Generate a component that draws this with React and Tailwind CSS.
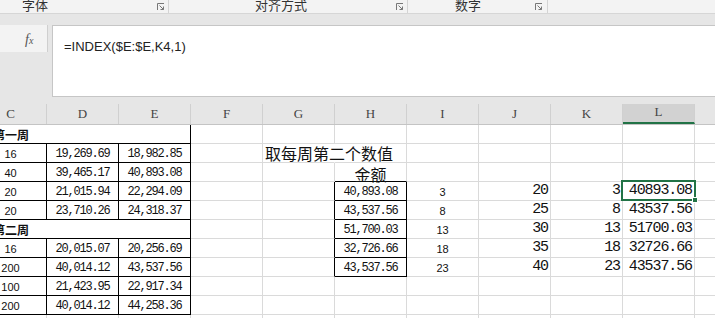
import React from 'react'

const cjk = "font-['Noto_Sans_CJK_SC',sans-serif]"
const mono = "font-['Liberation_Mono',monospace] text-[12px] tracking-[-1.2px]"
const sans = "font-['Liberation_Sans',sans-serif] text-[11px]"
const big = "font-['Liberation_Mono',monospace] text-[15px] tracking-[-1.1px]"

const RB = {
  g: 'border-r border-r-[#dadada]',
  k: 'border-r border-r-black',
  n: 'border-r border-r-transparent',
}
const BB = {
  g: 'border-b border-b-[#dadada]',
  k: 'border-b border-b-black',
}
const AL = {
  l: 'justify-start',
  c: 'justify-center',
  r: 'justify-end pr-[2px]',
}
const W = { 1: 'w-[72px]', 3: 'w-[216px]' }

const c = (t = '', o = {}) => ({ t, r: 'g', b: 'g', a: 'c', f: mono, s: '', span: 1, ...o })
const kc = (t, o = {}) => c(t, { r: 'k', b: 'k', ...o })

const weekRow = (label) => [
  c(label, { span: 3, r: 'k', b: 'k', a: 'l', f: `${cjk} text-[12px] font-bold pl-[18px]` }),
]

const leftRow = (n, d, e) => [kc(n, { f: sans }), kc(d), kc(e)]

const rightRow = (h, i, j, k, l, sel) => [
  c(),
  c('', { r: 'k' }),
  kc(h),
  c(i, { f: sans }),
  c(j, { a: 'r', f: big }),
  c(k, { a: 'r', f: big }),
  c(l, { a: 'r', f: big, sel }),
  c(),
]

const empties = (n) => Array.from({ length: n }, () => c())

const rows = [
  [...weekRow('第一周'), ...empties(8)],
  [
    ...leftRow('16', '19,269.69', '18,982.85'),
    c(),
    c('取每周第二个数值', { r: 'n', a: 'l', f: `${cjk} text-[16px] pl-[2px]`, s: 'translate-y-[1px]' }),
    ...empties(6),
  ],
  [
    ...leftRow('40', '39,465.17', '40,893.08'),
    c(),
    c(),
    c('金额', { b: 'k', f: `${cjk} text-[16px]`, s: 'translate-y-[3px]' }),
    ...empties(5),
  ],
  [...leftRow('20', '21,015.94', '22,294.09'), ...rightRow('40,893.08', '3', '20', '3', '40893.08', true)],
  [...leftRow('20', '23,710.26', '24,318.37'), ...rightRow('43,537.56', '8', '25', '8', '43537.56')],
  [...weekRow('第二周'), ...rightRow('51,700.03', '13', '30', '13', '51700.03')],
  [...leftRow('16', '20,015.07', '20,256.69'), ...rightRow('32,726.66', '18', '35', '18', '32726.66')],
  [...leftRow('200', '40,014.12', '43,537.56'), ...rightRow('43,537.56', '23', '40', '23', '43537.56')],
  [...leftRow('100', '21,423.95', '22,917.34'), ...empties(8)],
  [...leftRow('200', '40,014.12', '44,258.36'), ...empties(8)],
  [...empties(11)],
]

const cols = ['C', 'D', 'E', 'F', 'G', 'H', 'I', 'J', 'K', 'L', 'M']

const Launcher = () => (
  <svg width="8" height="8" viewBox="0 0 8 8" fill="none" stroke="#777" strokeWidth="1">
    <path d="M0.5 7V0.5H7" />
    <path d="M2.5 2.5L6.5 6.5" />
    <path d="M6.5 3.5V6.5H3.5" />
  </svg>
)

const Cell = ({ cell }) => (
  <div
    className={`relative h-[19px] shrink-0 flex items-end pb-[2px] text-[#111] ${W[cell.span]} ${RB[cell.r]} ${BB[cell.b]} ${AL[cell.a]} ${cell.f}`}
  >
    <span className={`relative z-[1] whitespace-nowrap leading-none ${cell.s}`}>{cell.t}</span>
    {cell.sel && (
      <>
        <div className="absolute -left-[2px] -top-[2px] -right-[2px] -bottom-[1px] border-2 border-[#217346] z-[2]"></div>
        <div className="absolute -right-[4px] -bottom-[3px] w-[6px] h-[6px] bg-[#217346] border border-white z-[3]"></div>
      </>
    )}
  </div>
)

const App = () => {
  return (
    <main className="w-[715px] h-[318px] overflow-hidden bg-white flex flex-col">
      {/* ribbon group labels */}
      <div className={`flex h-[14px] shrink-0 bg-[#f3f3f3] border-b border-[#d6d6d6] text-[13px] leading-[13px] text-[#333] ${cjk}`}>
        <div className="w-[168px] flex items-start pl-[22px] pr-[3px]">
          <span className="-mt-[2px]">字体</span>
          <span className="ml-auto mt-[3px]"><Launcher /></span>
        </div>
        <div className="w-px bg-[#d4d4d4]"></div>
        <div className="w-[238px] flex items-start pl-[86px] pr-[3px]">
          <span className="-mt-[2px]">对齐方式</span>
          <span className="ml-auto mt-[3px]"><Launcher /></span>
        </div>
        <div className="w-px bg-[#d4d4d4]"></div>
        <div className="w-[139px] flex items-start pl-[47px] pr-[4px]">
          <span className="-mt-[2px]">数字</span>
          <span className="ml-auto mt-[3px]"><Launcher /></span>
        </div>
        <div className="w-px bg-[#d4d4d4]"></div>
      </div>

      <div className="h-[11px] shrink-0 bg-[#e6e6e6]"></div>

      {/* formula bar */}
      <div className="flex h-[72px] shrink-0 bg-[#e6e6e6]">
        <div className="w-[48px] h-[27px] bg-[#f3f3f3] border-r border-[#cfcfcf] flex items-center pl-[25px] pt-[2px]">
          <span className="font-['Liberation_Serif',serif] italic text-[14px] text-[#555]">
            f<span className="text-[10px]">x</span>
          </span>
        </div>
        <div className="w-[4px]"></div>
        <div className="flex-1 bg-white border border-r-0 border-[#c6c6c6] pl-[11px] pt-[7px]">
          <span className="font-['Liberation_Sans',sans-serif] text-[13px] text-[#222]">=INDEX($E:$E,K4,1)</span>
        </div>
      </div>

      <div className="h-[7px] shrink-0 bg-[#e6e6e6]"></div>

      {/* sheet */}
      <div className="overflow-hidden flex-1">
        <div className="-ml-[25px] w-[792px] flex flex-col">
          <div className="flex h-[21px] bg-[#e6e6e6] border-b border-[#c4c4c4]">
            {cols.map((col) => (
              <div
                key={col}
                className={`w-[72px] shrink-0 flex items-end justify-center pb-[1px] border-r border-r-[#d0d0d0] font-['Liberation_Serif',serif] text-[13px] text-[#444] ${col === 'L' ? 'bg-[#d2d2d2] border-b-2 border-b-[#217346]' : ''}`}
              >
                {col}
              </div>
            ))}
          </div>
          {rows.map((row, i) => (
            <div key={i} className="flex">
              {row.map((cell, j) => (
                <Cell key={j} cell={cell} />
              ))}
            </div>
          ))}
        </div>
      </div>
    </main>
  )
}

export default App
